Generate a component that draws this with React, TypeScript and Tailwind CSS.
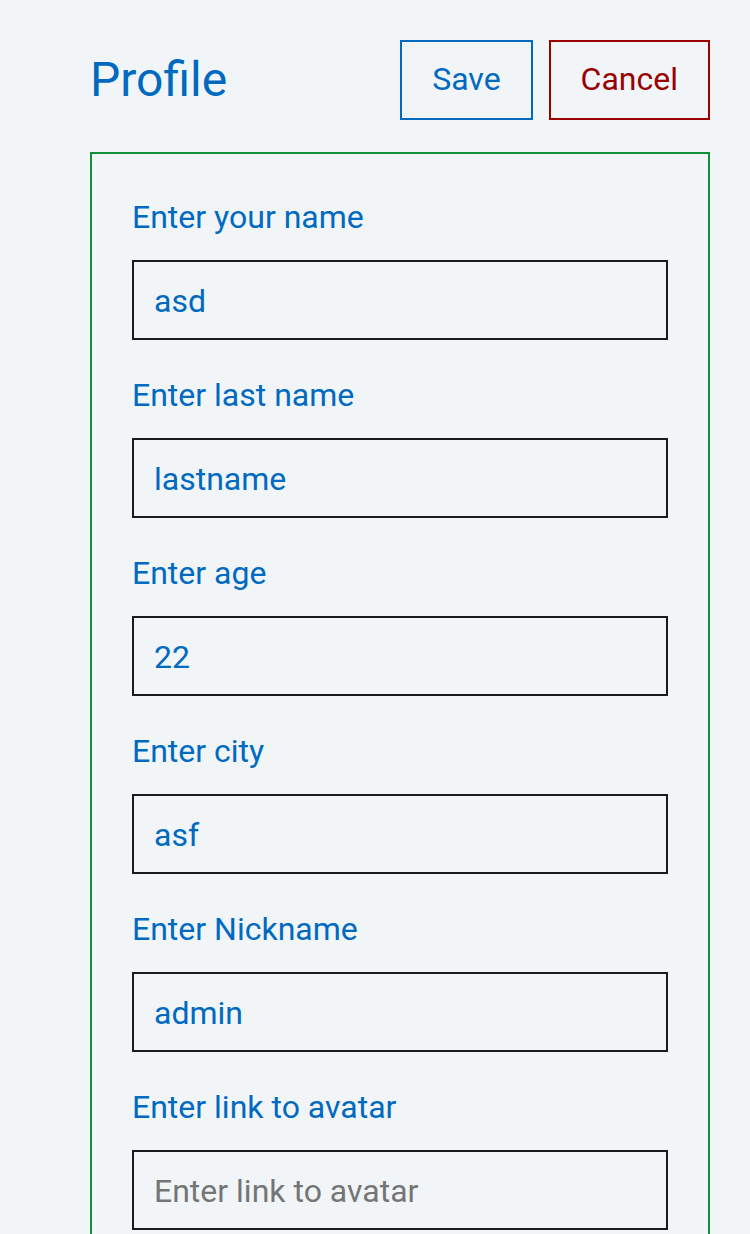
import { useState } from "react";

type Field = {
  id: string;
  label: string;
  value: string;
};

const initialFields: Field[] = [
  { id: "firstname", label: "Enter your name", value: "asd" },
  { id: "lastname", label: "Enter last name", value: "lastname" },
  { id: "age", label: "Enter age", value: "22" },
  { id: "city", label: "Enter city", value: "asf" },
  { id: "username", label: "Enter Nickname", value: "admin" },
  { id: "avatar", label: "Enter link to avatar", value: "" },
];

export default function App() {
  const [fields, setFields] = useState(initialFields);

  const update = (id: string, value: string) =>
    setFields((prev) => prev.map((f) => (f.id === id ? { ...f, value } : f)));

  return (
    <main className="h-screen overflow-hidden bg-[#f1f5f8] pt-10 pr-10 pl-[90px] font-['Roboto',sans-serif] text-[32px] leading-[38px] text-[#0069c0]">
      <header className="flex items-center justify-between">
        <h1 className="text-[48px] leading-[56px]">Profile</h1>
        <div className="flex gap-4">
          <button type="button" className="h-20 border-2 border-[#0069c0] px-[30px] pb-0.5">
            Save
          </button>
          <button type="button" className="h-20 border-2 border-[#9b0000] px-[30px] pb-0.5 text-[#9b0000]">
            Cancel
          </button>
        </div>
      </header>
      <form className="mt-8 flex flex-col gap-9 border-2 border-[#10913a] px-10 py-11">
        {fields.map((f) => (
          <div key={f.id} className="flex flex-col gap-6">
            <label htmlFor={f.id}>{f.label}</label>
            <input
              id={f.id}
              value={f.value}
              placeholder={f.label}
              onChange={(e) => update(f.id, e.target.value)}
              className="h-20 w-full border-2 border-[#1b1b1b] bg-transparent px-5 pt-0.5 outline-none placeholder:text-[#757575]"
            />
          </div>
        ))}
      </form>
    </main>
  );
}
